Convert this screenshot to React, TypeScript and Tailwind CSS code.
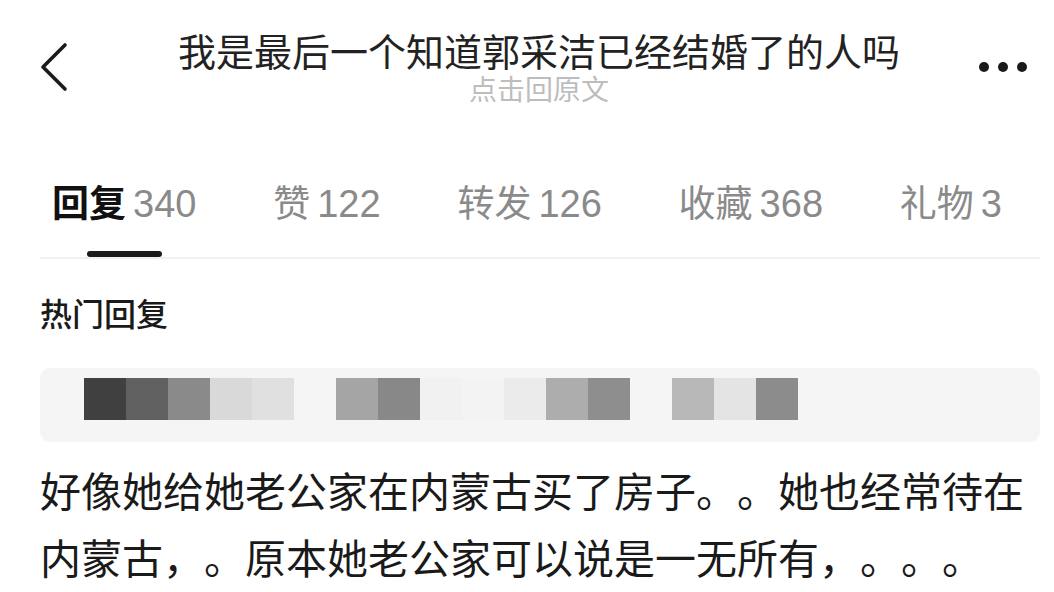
import React from "react";

const cells: string[] = [
  "bg-[#404040]",
  "bg-[#606060]",
  "bg-[#8a8a8a]",
  "bg-[#d9d9d9]",
  "bg-[#e0e0e0]",
  "bg-transparent",
  "bg-[#a5a5a5]",
  "bg-[#888888]",
  "bg-[#f1f1f1]",
  "bg-[#f3f3f3]",
  "bg-[#ebebeb]",
  "bg-[#adadad]",
  "bg-[#8e8e8e]",
  "bg-transparent",
  "bg-[#b8b8b8]",
  "bg-[#e4e4e4]",
  "bg-[#8c8c8c]",
];

const tabs = [
  { label: "回复", count: "340", active: true },
  { label: "赞", count: "122", active: false },
  { label: "转发", count: "126", active: false },
  { label: "收藏", count: "368", active: false },
  { label: "礼物", count: "3", active: false },
];

export default function App() {
  return (
    <div className="w-[1054px] h-[592px] overflow-hidden bg-white font-['Noto_Sans_CJK_SC',sans-serif] text-[#1c1c1c] [text-spacing-trim:space-all]">
      {/* Header */}
      <div className="flex h-[130px] items-start">
        <div className="w-[100px] pl-[40px] pt-[42px]">
          <svg width="28" height="50" viewBox="0 0 28 50" fill="none">
            <path
              d="M25 3 L3 25 L25 47"
              stroke="#1a1a1a"
              strokeWidth="3.6"
              strokeLinecap="round"
              strokeLinejoin="round"
            />
          </svg>
        </div>
        <div className="flex flex-1 flex-col items-center pt-[30px]">
          <div className="text-[38px] leading-[40px] text-[#222222] whitespace-nowrap">
            我是最后一个知道郭采洁已经结婚了的人吗
          </div>
          <div className="mt-[2px] text-[28px] leading-[32px] text-[#bdbdbd]">
            点击回原文
          </div>
        </div>
        <div className="flex w-[76px] gap-[9px] pl-[1px] pt-[62px]">
          <span className="block h-[10px] w-[10px] rounded-full bg-[#1a1a1a]" />
          <span className="block h-[10px] w-[10px] rounded-full bg-[#1a1a1a]" />
          <span className="block h-[10px] w-[10px] rounded-full bg-[#1a1a1a]" />
        </div>
      </div>

      {/* Tabs */}
      <div className="flex justify-between px-[52px] pt-[51px]">
        {tabs.map((t) => (
          <div key={t.label} className="flex flex-col items-center">
            <div className="flex items-baseline leading-[40px] whitespace-nowrap">
              <span
                className={
                  t.active
                    ? "text-[37px] font-bold text-[#111111]"
                    : "text-[37px] text-[#8a8a8a]"
                }
              >
                {t.label}
              </span>
              <span className="ml-[7px] font-['Liberation_Sans',sans-serif] text-[38px] text-[#8a8a8a]">
                {t.count}
              </span>
            </div>
            <div
              className={
                t.active
                  ? "mt-[27px] h-[6px] w-[75px] rounded-full bg-[#1a1a1a]"
                  : "mt-[27px] h-[6px] w-[75px]"
              }
            />
          </div>
        ))}
      </div>
      <div className="ml-[40px] mr-[14px] h-[2px] bg-[#f0f0f0]" />

      {/* Hot replies */}
      <div className="px-[40px] pt-[33px] text-[32px] leading-[40px] font-medium text-[#1a1a1a]">
        热门回复
      </div>

      <div className="ml-[40px] mr-[14px] mt-[36px] h-[74px] rounded-[10px] bg-[#f5f5f5] pl-[44px] pt-[10px]">
        <div className="flex">
          {cells.map((c, i) => (
            <div key={i} className={"h-[42px] w-[42px] " + c} />
          ))}
        </div>
      </div>

      {/* Body */}
      <div className="pl-[40px] pr-[12px] pt-[14px] text-[41px] leading-[67px] text-[#1a1a1a]">
        好像她给她老公家在内蒙古买了房子。。她也经常待在内蒙古，。原本她老公家可以说是一无所有，。。。
      </div>
    </div>
  );
}
